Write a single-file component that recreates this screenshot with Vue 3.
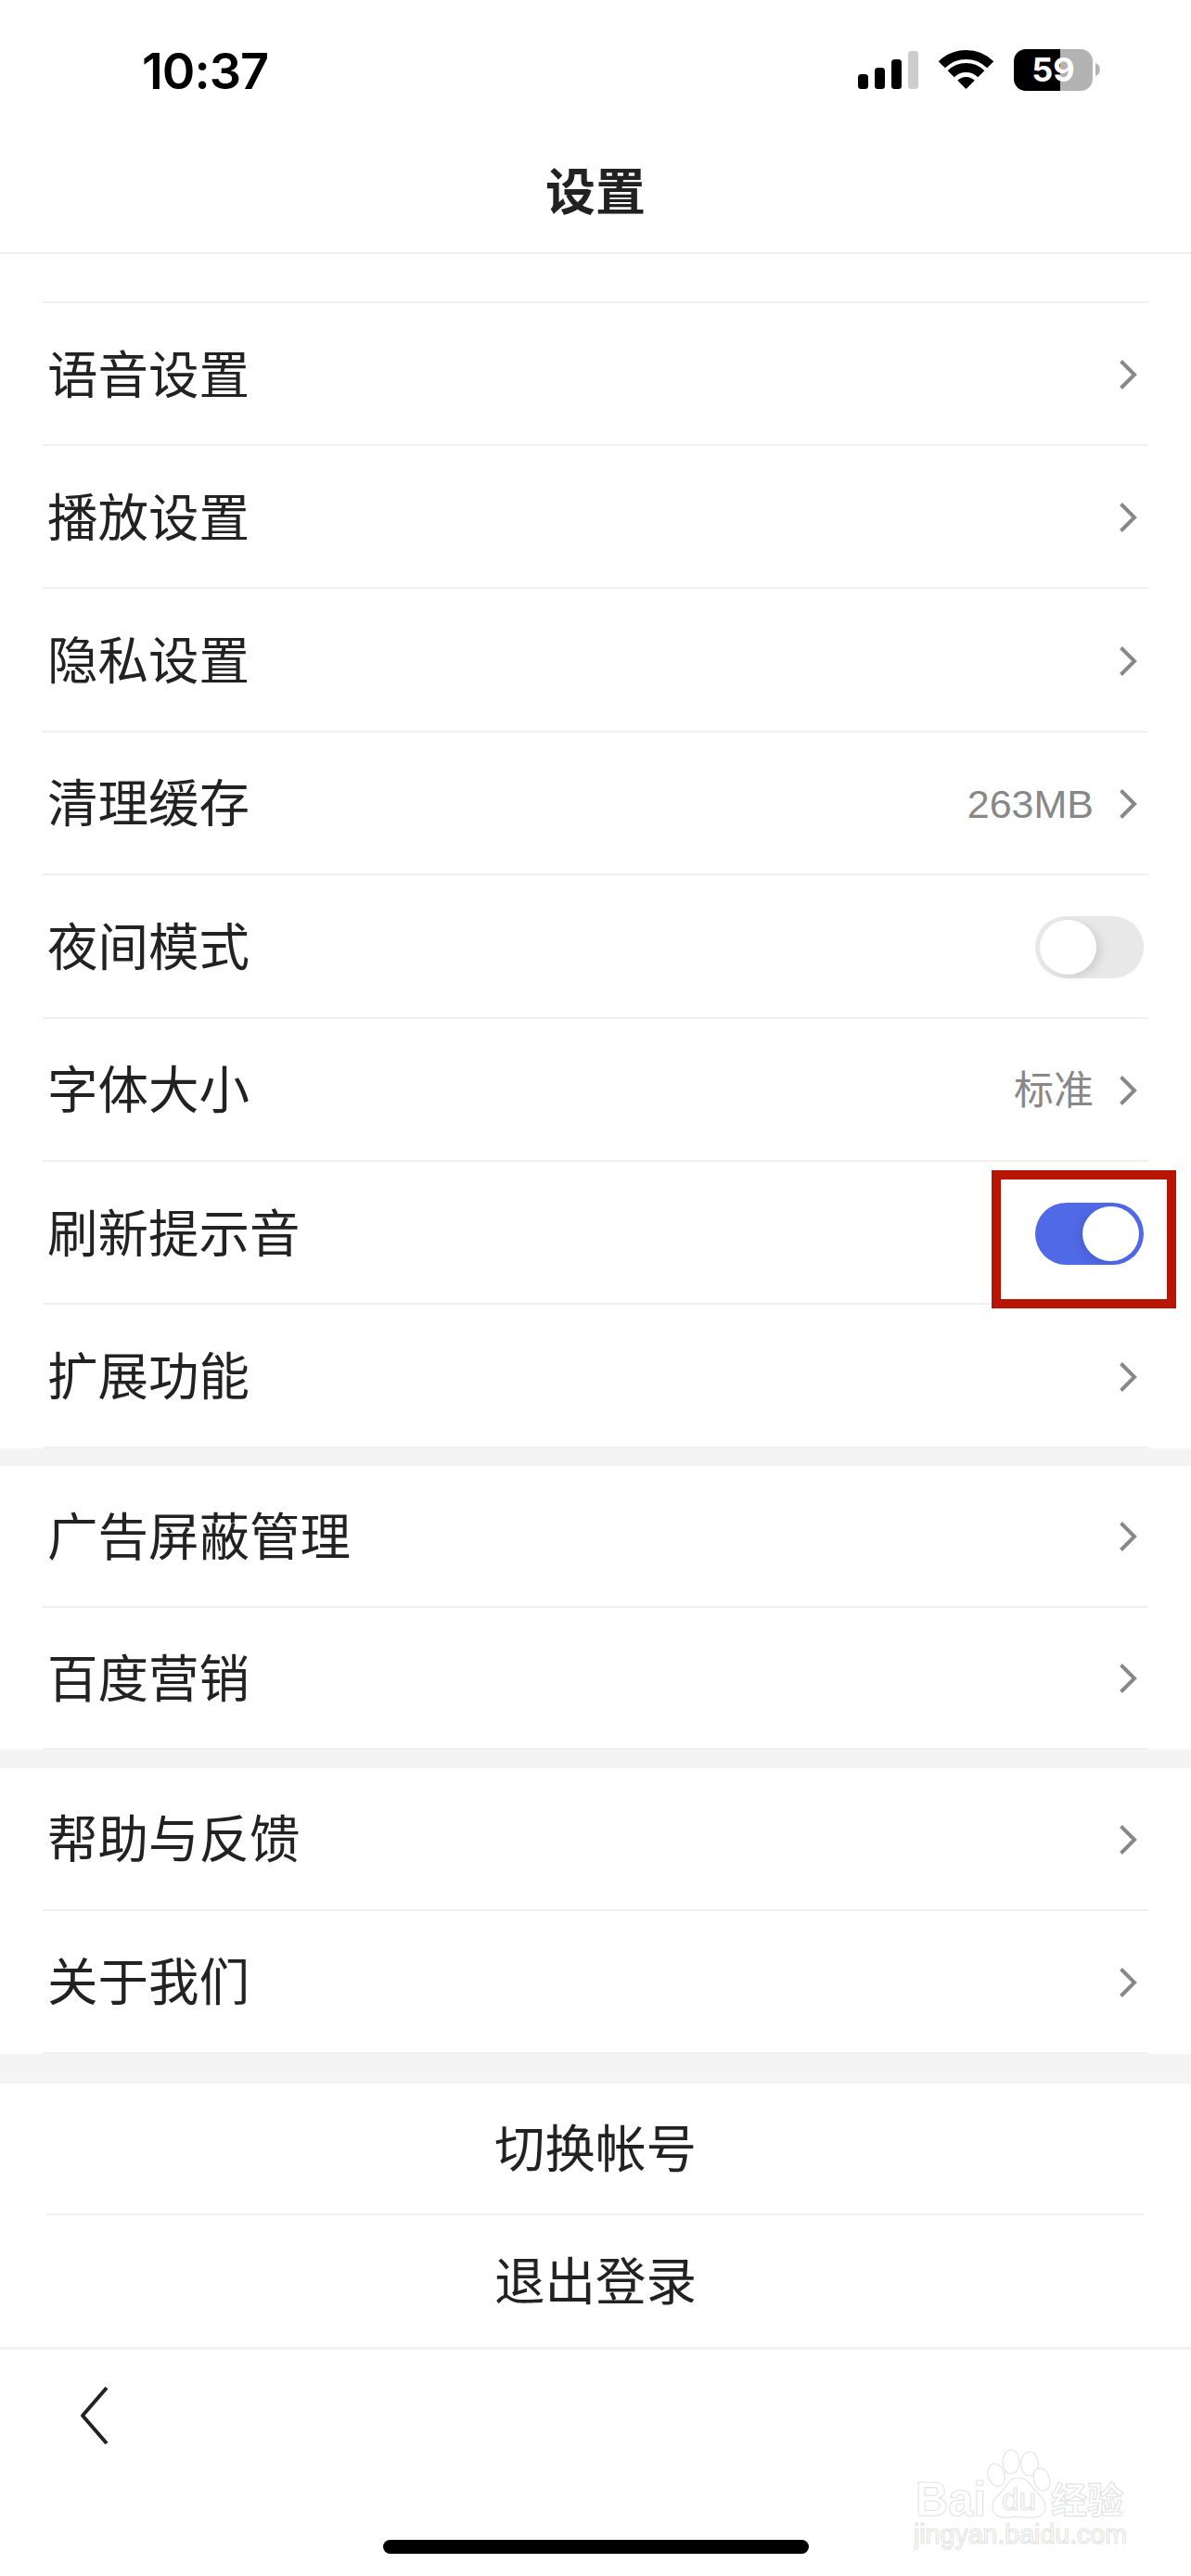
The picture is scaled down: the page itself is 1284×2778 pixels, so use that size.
<script setup>
const groups = [
  { cls: 'group-main', rows: [
    { label: '语音设置' }, { label: '播放设置' }, { label: '隐私设置' },
    { label: '清理缓存', value: '263MB' }, { label: '夜间模式', toggle: 'off' },
    { label: '字体大小', value: '标准' }, { label: '刷新提示音', toggle: 'on', mark: true },
    { label: '扩展功能' }
  ]},
  { cls: 'group-ads', rows: [{ label: '广告屏蔽管理' }, { label: '百度营销' }] },
  { cls: 'group-help', rows: [{ label: '帮助与反馈' }, { label: '关于我们' }] }
]
</script>

<template>
  <div class="page">
    <div class="status">
      <span class="time">10:37</span>
      <svg class="status-icons" width="262" height="46" viewBox="0 0 262 46">
        <rect x="0" y="27" width="11" height="16" rx="3.5" fill="#000" />
        <rect x="18" y="20" width="11" height="23" rx="3.5" fill="#000" />
        <rect x="36" y="11" width="11" height="32" rx="3.5" fill="#000" />
        <rect x="54" y="2" width="11" height="41" rx="3.5" fill="#ccc" />
        <path d="M90.3 16.8A37 37 0 0 1 142.7 16.8M100.2 26.7A23 23 0 0 1 132.8 26.7" fill="none" stroke="#000" stroke-width="10" />
        <path d="M116.5 43L107.3 33.8A13 13 0 0 1 125.7 33.8Z" fill="#000" />
        <path d="M181 0H218V45H181A13 13 0 0 1 168 32V13A13 13 0 0 1 181 0Z" fill="#000" />
        <path d="M218 0H240A13 13 0 0 1 253 13V32A13 13 0 0 1 240 45H218Z" fill="#b3b3b3" />
        <path d="M256 15A7.5 7.5 0 0 1 256 29Z" fill="#b3b3b3" />
        <text x="210.5" y="35" text-anchor="middle" class="batt">59</text>
      </svg>
    </div>
    <header class="title">设置</header>

    <div class="strip"></div>

    <section v-for="g in groups" :key="g.cls" class="group" :class="g.cls">
      <div v-for="r in g.rows" :key="r.label" class="row">
        <span class="label">{{ r.label }}</span>
        <span class="side">
          <template v-if="r.toggle">
            <span class="toggle" :class="r.toggle"><span class="knob"></span></span>
            <span v-if="r.mark" class="mark"></span>
          </template>
          <template v-else>
            <span v-if="r.value" class="value">{{ r.value }}</span>
            <svg class="chev" width="20" height="34" viewBox="0 0 20 34">
              <path d="M2.5 2.5L17 17L2.5 31.5" fill="none" stroke="#888" stroke-width="4" />
            </svg>
          </template>
        </span>
      </div>
    </section>

    <section class="actions">
      <div class="action">切换帐号</div>
      <div class="action">退出登录</div>
    </section>

    <footer class="bottom">
      <svg class="back" width="36" height="66" viewBox="0 0 36 66">
        <path d="M32 3L6 33L32 63" fill="none" stroke="#222" stroke-width="4" stroke-linejoin="round" />
      </svg>
      <div class="home"></div>
    </footer>

    <svg class="watermark" width="240" height="120" viewBox="0 0 240 120">
      <g class="wm-line">
        <ellipse cx="89" cy="33" rx="9" ry="12.5" transform="rotate(-20 89 33)" />
        <ellipse cx="105" cy="19" rx="9" ry="13" />
        <ellipse cx="125" cy="21" rx="9.5" ry="13" />
        <ellipse cx="138" cy="38" rx="8.5" ry="12.5" transform="rotate(-15 138 38)" />
        <path d="M113 36C103 36 100 46 94 52C88 58 84 62 85 69C86 77 94 80 102 79C108 78 118 78 124 79C133 80 141 77 142 69C143 62 139 58 133 52C127 46 123 36 113 36Z" />
      </g>
      <text x="2" y="77" textLength="76" lengthAdjust="spacingAndGlyphs" class="wm-bai">Bai</text>
      <text x="95" y="71" textLength="37" lengthAdjust="spacingAndGlyphs" class="wm-du">du</text>
      <text x="148" y="74" class="wm-cjk">经验</text>
      <text x="0" y="107" textLength="230" lengthAdjust="spacingAndGlyphs" class="wm-url">jingyan.baidu.com</text>
    </svg>
  </div>
</template>

<style scoped>
.page {
  position: relative;
  width: 1284px;
  height: 2778px;
  background: #fff;
  overflow: hidden;
  font-family: "Noto Sans CJK SC", "Noto Sans", sans-serif;
  color: #222;
}
.status {
  height: 140px;
  box-sizing: border-box;
  padding: 53px 97px 0 153px;
  display: flex;
  justify-content: space-between;
  align-items: flex-start;
}
.time {
  font-family: Inter, "Liberation Sans", sans-serif;
  font-size: 54px;
  font-weight: 600;
  line-height: 48px;
  letter-spacing: -1px;
  color: #000;
}
.batt {
  font-family: Inter, "Liberation Sans", sans-serif;
  font-size: 36px;
  font-weight: 700;
  fill: #fff;
}
.title {
  height: 134px;
  box-sizing: border-box;
  padding-bottom: 6px;
  border-bottom: 2px solid #efefef;
  display: flex;
  align-items: center;
  justify-content: center;
  font-size: 54px;
  font-weight: 700;
  color: #222;
}
.strip { height: 51px; }
.group { padding: 0 46px; }
.group-main { border-bottom: 19px solid #f4f4f4; }
.group-main .row { height: 154.4px; }
.group-main .row:first-child { height: 156px; border-top: 2px solid #f0f0f0; }
.group-ads { border-bottom: 20px solid #f4f4f4; }
.group-help { border-bottom: 32px solid #f4f4f4; }
.group-help .row { height: 154px; }
.row {
  height: 153px;
  box-sizing: border-box;
  padding: 2px 12px 0 5px;
  border-bottom: 2px solid #f0f0f0;
  display: flex;
  align-items: center;
  justify-content: space-between;
}
.row:has(.toggle) { padding-right: 5px; }
.label {
  font-size: 54.5px;
  line-height: 70px;
  margin-bottom: 7px;
}
.side {
  position: relative;
  display: flex;
  align-items: center;
  gap: 27px;
}
.value {
  font-family: "Liberation Sans", "Noto Sans CJK SC", sans-serif;
  font-size: 43px;
  color: #888;
  line-height: 50px;
}
.chev { display: block; }
.toggle {
  position: relative;
  display: block;
  width: 117px;
  height: 67px;
  border-radius: 34px;
}
.toggle.off { background: #e8e8e8; }
.toggle.on { background: #5069e6; }
.knob {
  position: absolute;
  top: 4px;
  width: 61px;
  height: 59px;
  border-radius: 50%;
  background: #fff;
}
.off .knob { left: 5px; box-shadow: 5px 3px 9px rgba(0, 0, 0, 0.1); }
.on .knob { right: 5px; box-shadow: -4px 2px 8px rgba(0, 0, 0, 0.1); }
.mark {
  position: absolute;
  top: -35px;
  left: -47px;
  width: 179px;
  height: 129px;
  border: 10px solid #b91504;
}
.actions { padding: 0 50px; border-bottom: 3px solid #f2f2f2; }
.action {
  height: 142px;
  box-sizing: border-box;
  padding-bottom: 6px;
  display: flex;
  align-items: center;
  justify-content: center;
  font-size: 54.5px;
  line-height: 70px;
}
.action:first-child { border-bottom: 2px solid #f0f0f0; }
.bottom {
  height: 245px;
  box-sizing: border-box;
  padding: 38px 0 0 83px;
}
.back { display: block; }
.home {
  position: absolute;
  left: 413px;
  bottom: 24px;
  width: 459px;
  height: 15px;
  border-radius: 8px;
  background: #000;
}
.watermark {
  position: absolute;
  left: 985px;
  top: 2636px;
}
.wm-line, .watermark text {
  fill: #fff;
  stroke: #e4e4e4;
  stroke-width: 1.2px;
}
.wm-bai { font-family: "Liberation Sans", sans-serif; font-weight: 700; font-size: 52px; }
.wm-du { font-family: "Liberation Sans", sans-serif; font-size: 34px; }
.wm-cjk { font-family: "Noto Sans CJK SC", sans-serif; font-weight: 700; font-size: 39px; }
.wm-url { font-family: "Liberation Sans", sans-serif; font-size: 29px; }
</style>
